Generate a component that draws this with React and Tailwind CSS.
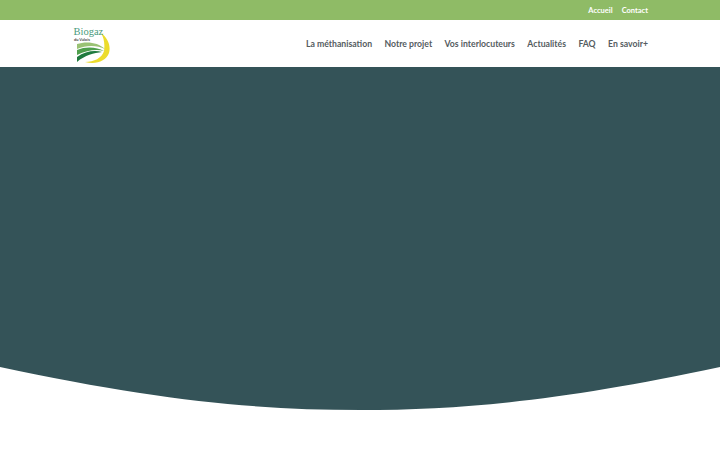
export default function App() {
  const nav = ["La méthanisation", "Notre projet", "Vos interlocuteurs", "Actualités", "FAQ", "En savoir+"];
  return (
    <div className="w-[720px] h-[450px] overflow-hidden bg-white flex flex-col font-['Lato','Noto_Sans',sans-serif]">
      <div className="h-5 pt-px bg-[#8fbb66] flex justify-end items-center gap-[9px] pr-[72px] text-[7.5px] font-bold text-white shrink-0">
        <span>Accueil</span>
        <span>Contact</span>
      </div>
      <header className="h-[47px] bg-white shrink-0 flex items-center justify-between px-[72px]">
        <svg width="40" height="40" viewBox="0 0 40 40">
          <path d="M29 9 C36 14 39 22 37 29 C34 37 24 41 13 38 C22 38 30 34 32 27 C33 20 32 14 29 9Z" fill="#ecdc2c" />
          <path d="M5 20 C14 17 26 18 33 25 C25 21 14 21 5 25Z" fill="#9ac274" />
          <path d="M5 26 C14 22 25 23 32 27 C25 25 15 26 5 31Z" fill="#4f9f4c" />
          <path d="M5 33 C13 27 23 26 30 28 C22 29 13 31 5 38Z" fill="#1f7a3e" />
          <text x="1.5" y="10.5" fontSize="10.5" fontFamily="'Liberation Serif',serif" fill="#4a9a7c">Biogaz</text>
          <text x="2" y="17" fontSize="4" fontWeight="700" fontFamily="'Lato',sans-serif" fill="#444">du Valois</text>
        </svg>
        <nav className="flex items-center gap-[12.4px] text-[8.7px] font-bold text-[#555c5f]">
          {nav.map((t) => (
            <span key={t} className="whitespace-nowrap">{t}</span>
          ))}
        </nav>
      </header>
      <section className="relative h-[343px] shrink-0 bg-[#345358]">
        <svg className="absolute left-0 bottom-0 block" width="720" height="43" viewBox="0 0 720 43">
          <path d="M0 0 C150 32 250 43 360 43 C470 43 570 32 720 0 L720 43 L0 43Z" fill="#ffffff" />
        </svg>
      </section>
      <div className="flex-1 bg-white" />
    </div>
  );
}
